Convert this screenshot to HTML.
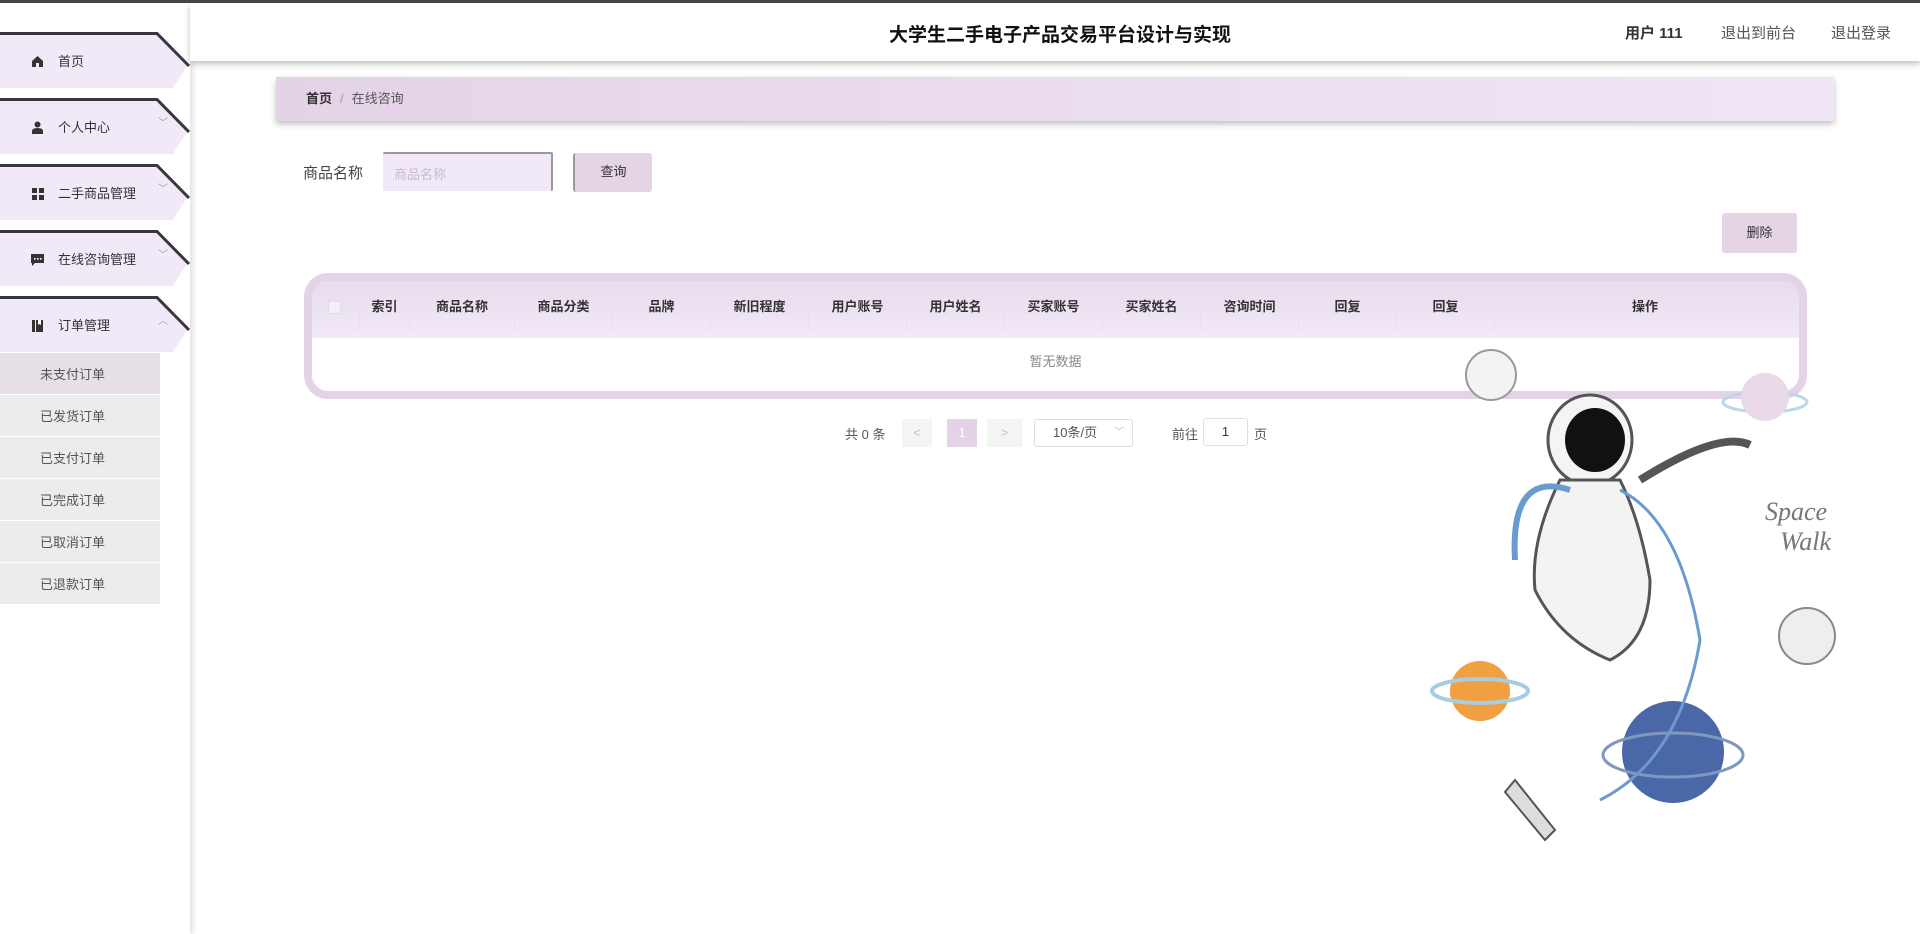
<!DOCTYPE html>
<html><head><meta charset="utf-8"><style>
*{margin:0;padding:0;box-sizing:border-box}
body{width:1920px;height:934px;position:relative;background:#fff;font-family:"Liberation Sans","Noto Sans CJK SC",sans-serif;color:#333;overflow:hidden}
.a{position:absolute}
.topline{left:0;top:0;width:1920px;height:3px;background:#444}
.header{left:190px;top:3px;width:1730px;height:58px;background:#fff;box-shadow:0 3px 6px rgba(0,0,0,.25)}
.side{left:0;top:3px;width:190px;height:931px;background:#fff;box-shadow:2px 0 6px rgba(0,0,0,.15)}
.mi{left:0;width:192px;height:60px}
.mi span{position:absolute;left:58px;top:13px;font-size:13px;color:#333}
.mi i{position:absolute;left:31px;top:17px;width:13px;height:13px}
.mi b{position:absolute;left:158px;top:10px;font-size:10px;color:#999;font-weight:normal}
.sub{left:0;width:160px;height:41px;background:#ececec;font-size:13px;color:#555;padding:11px 0 0 40px}
.th{position:absolute;top:0;height:47px;line-height:47px;text-align:center;font-size:13px;font-weight:bold;color:#333;border-right:1px solid #eadfea}
</style></head><body>
<div class="a side"></div>
<div class="a header"></div>
<div class="a topline"></div>
<div class="a" style="left:110px;width:1900px;text-align:center;top:20px;font-size:19px;font-weight:bold;color:#111">大学生二手电子产品交易平台设计与实现</div>
<div class="a" style="left:1625px;top:22px;font-size:15px;font-weight:bold;color:#333">用户 111</div>
<div class="a" style="left:1721px;top:22px;font-size:15px;color:#555">退出到前台</div>
<div class="a" style="left:1831px;top:22px;font-size:15px;color:#555">退出登录</div>

<svg class="a" style="left:0;top:0" width="195" height="360">
<g id="m"><polygon points="0,34 157,34 188,64 173,88 0,88" fill="#f1e8f8"/><polyline points="0,33.5 157,33.5 189,66" fill="none" stroke="#3a3640" stroke-width="3"/></g>
<use href="#m" y="66"/><use href="#m" y="132"/><use href="#m" y="198"/><use href="#m" y="264"/>
</svg>
<div class="a mi" style="top:38px"><i><svg width="13" height="13"><path d="M1 6 L6.5 1 L12 6 V12 H8 V8 H5 V12 H1Z" fill="#333"/></svg></i><span>首页</span></div>
<div class="a mi" style="top:104px"><i><svg width="13" height="13"><circle cx="6.5" cy="3.5" r="3" fill="#333"/><path d="M1 13 V10 Q1 7 6.5 7 Q12 7 12 10 V13Z" fill="#333"/></svg></i><span>个人中心</span><b>﹀</b></div>
<div class="a mi" style="top:170px"><i><svg width="13" height="13"><rect x="1" y="1" width="5" height="5" fill="#333"/><rect x="8" y="1" width="5" height="5" fill="#333"/><rect x="1" y="8" width="5" height="5" fill="#333"/><rect x="8" y="8" width="5" height="5" fill="#333"/></svg></i><span>二手商品管理</span><b>﹀</b></div>
<div class="a mi" style="top:236px"><i><svg width="13" height="13"><path d="M0 1 H13 V10 H4 L1 13 V10 H0Z" fill="#333"/><rect x="3" y="5" width="1.6" height="1.6" fill="#fff"/><rect x="6" y="5" width="1.6" height="1.6" fill="#fff"/><rect x="9" y="5" width="1.6" height="1.6" fill="#fff"/></svg></i><span>在线咨询管理</span><b>﹀</b></div>
<div class="a mi" style="top:302px"><i><svg width="13" height="13"><rect x="1" y="1" width="3" height="12" fill="#333"/><rect x="5" y="1" width="7" height="12" fill="#333"/><path d="M7 1 V6 L8.5 5 L10 6 V1" fill="#fff"/></svg></i><span>订单管理</span><b>︿</b></div>
<div class="a sub" style="top:353px;background:#e6dfe6">未支付订单</div>
<div class="a sub" style="top:395px">已发货订单</div>
<div class="a sub" style="top:437px">已支付订单</div>
<div class="a sub" style="top:479px">已完成订单</div>
<div class="a sub" style="top:521px">已取消订单</div>
<div class="a sub" style="top:563px">已退款订单</div>

<div class="a" style="left:276px;top:77px;width:1558px;height:44px;background:linear-gradient(90deg,#e4d3e6,#f0e6f6);box-shadow:0 3px 6px rgba(0,0,0,.25);font-size:13px;line-height:44px;padding-left:30px"><b style="color:#333">首页</b><span style="color:#999;margin:0 8px">/</span><span style="color:#555">在线咨询</span></div>

<div class="a" style="left:303px;top:162px;font-size:15px;color:#444">商品名称</div>
<div class="a" style="left:383px;top:152px;width:170px;height:39px;background:#f1e8f8;border-top:2px solid #999;border-right:2px solid #999;border-radius:2px;font-size:13px;color:#c8bcc8;padding:10px 0 0 11px">商品名称</div>
<div class="a" style="left:573px;top:153px;width:79px;height:39px;background:#e4d4e4;border-left:2px solid #999;border-radius:3px;font-size:13px;color:#333;text-align:center;line-height:38px">查询</div>
<div class="a" style="left:1722px;top:213px;width:75px;height:40px;background:#e4d4e4;border-radius:3px;font-size:13px;color:#333;text-align:center;line-height:40px">删除</div>

<div class="a" style="left:304px;top:273px;width:1503px;height:126px;border:8px solid #e4d3e6;border-radius:24px;background:#fff;overflow:hidden">
<div style="position:absolute;left:0;top:0;width:100%;height:57px;background:linear-gradient(#e8dcec,#f1e8f8)">
<div style="position:absolute;left:16px;top:20px;width:13px;height:13px;background:#f4f0f8;border:1px solid #ddd"></div>
<div class="th" style="left:0;width:48px;top:2px"></div>
<div class="th" style="left:48px;width:50px;top:2px">索引</div>
<div class="th" style="left:98px;width:105px;top:2px">商品名称</div>
<div class="th" style="left:203px;width:98px;top:2px">商品分类</div>
<div class="th" style="left:301px;width:98px;top:2px">品牌</div>
<div class="th" style="left:399px;width:98px;top:2px">新旧程度</div>
<div class="th" style="left:497px;width:98px;top:2px">用户账号</div>
<div class="th" style="left:595px;width:98px;top:2px">用户姓名</div>
<div class="th" style="left:693px;width:98px;top:2px">买家账号</div>
<div class="th" style="left:791px;width:98px;top:2px">买家姓名</div>
<div class="th" style="left:889px;width:98px;top:2px">咨询时间</div>
<div class="th" style="left:987px;width:98px;top:2px">回复</div>
<div class="th" style="left:1085px;width:98px;top:2px">回复</div>
<div class="th" style="left:1183px;width:300px;top:2px;border:none">操作</div>
</div>
<div style="position:absolute;left:0;top:70px;width:100%;text-align:center;font-size:13px;color:#888">暂无数据</div>
</div>

<div class="a" style="left:845px;top:424px;font-size:13px;color:#555">共 0 条</div>
<div class="a" style="left:902px;top:419px;width:30px;height:28px;background:#f4f4f5;color:#c0c4cc;text-align:center;line-height:28px;font-size:13px">&lt;</div>
<div class="a" style="left:947px;top:419px;width:30px;height:28px;background:#e4d3e6;color:#fff;text-align:center;line-height:28px;font-size:13px">1</div>
<div class="a" style="left:987px;top:419px;width:35px;height:28px;background:#f4f4f5;color:#c0c4cc;text-align:center;line-height:28px;font-size:13px">&gt;</div>
<div class="a" style="left:1034px;top:419px;width:99px;height:28px;border:1px solid #dcdfe6;border-radius:3px;font-size:13px;color:#555;line-height:26px;padding-left:18px">10条/页<span style="position:absolute;right:8px;color:#bbb;font-size:10px">﹀</span></div>
<div class="a" style="left:1172px;top:424px;font-size:13px;color:#555">前往</div>
<div class="a" style="left:1203px;top:418px;width:45px;height:28px;border:1px solid #dcdfe6;border-radius:3px;font-size:13px;color:#333;text-align:center;line-height:26px">1</div>
<div class="a" style="left:1254px;top:424px;font-size:13px;color:#555">页</div>

<svg class="a" style="left:1420px;top:340px" width="420" height="540">
<circle cx="71" cy="35" r="25" fill="#f3f3f3" stroke="#999" stroke-width="2"/>
<ellipse cx="345" cy="62" rx="42" ry="10" fill="none" stroke="#b8d8e8" stroke-width="3"/>
<circle cx="345" cy="57" r="24" fill="#e8d8e8"/>
<circle cx="60" cy="351" r="30" fill="#f0a040"/>
<ellipse cx="60" cy="351" rx="48" ry="12" fill="none" stroke="#a8cce0" stroke-width="4"/>
<circle cx="253" cy="412" r="51" fill="#4a68a8"/>
<ellipse cx="253" cy="415" rx="70" ry="22" fill="none" stroke="#8098c0" stroke-width="3"/>
<circle cx="387" cy="296" r="28" fill="#eee" stroke="#888" stroke-width="2"/>
<ellipse cx="170" cy="100" rx="42" ry="45" fill="#f4f4f4" stroke="#555" stroke-width="3"/>
<ellipse cx="175" cy="100" rx="30" ry="32" fill="#111"/>
<path d="M140 140 Q110 200 115 250 Q140 300 190 320 Q230 300 230 240 Q220 180 200 140Z" fill="#f3f3f3" stroke="#555" stroke-width="3"/>
<path d="M150 150 Q90 130 95 220" fill="none" stroke="#6a9ad0" stroke-width="6"/>
<path d="M220 140 Q300 90 330 105" fill="none" stroke="#555" stroke-width="8"/>
<path d="M200 150 Q260 180 280 300 Q260 420 180 460" fill="none" stroke="#6a9ad0" stroke-width="3"/>
<path d="M95 440 L135 490 L125 500 L85 452Z" fill="#ddd" stroke="#555" stroke-width="2"/>
<text x="345" y="180" font-family="Liberation Serif,serif" font-style="italic" font-size="26" fill="#777">Space</text>
<text x="360" y="210" font-family="Liberation Serif,serif" font-style="italic" font-size="26" fill="#777">Walk</text>
</svg>
</body></html>
